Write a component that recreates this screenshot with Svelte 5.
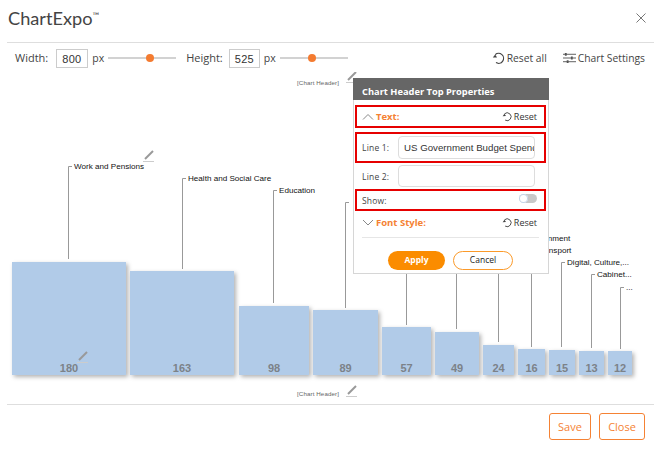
<script>
  const bars = [
    { x: 12, y: 262, w: 114, v: 180, lx: 68, top: 166, end: 259, label: 'Work and Pensions' },
    { x: 130, y: 271, w: 104, v: 163, lx: 182, top: 178, end: 269, label: 'Health and Social Care' },
    { x: 239, y: 306, w: 70, v: 98, lx: 273, top: 190, end: 303, label: 'Education' },
    { x: 313, y: 310, w: 65, v: 89, lx: 345, top: 202, end: 308, label: '' },
    { x: 382, y: 327, w: 49, v: 57, lx: 406, top: 214, end: 325, label: '' },
    { x: 435, y: 332, w: 44, v: 49, lx: 456, top: 226, end: 329, label: '' },
    { x: 483, y: 345, w: 31, v: 24, lx: 498, top: 238, end: 342, label: 'Local Government' },
    { x: 518, y: 349, w: 27, v: 16, lx: 531, top: 250, end: 347, label: 'Transport' },
    { x: 549, y: 350, w: 26, v: 15, lx: 561, top: 262, end: 347, label: 'Digital, Culture,...' },
    { x: 579, y: 351, w: 25, v: 13, lx: 591, top: 274, end: 348, label: 'Cabinet...' },
    { x: 608, y: 351, w: 24, v: 12, lx: 620, top: 287, end: 349, label: '...' }
  ];
  const pencils = [[149, 156], [352, 77], [83, 357], [352, 391]];
</script>

<div class="modal">
  <header class="head">
    <h1>ChartExpo<sup>™</sup></h1>
    <svg class="close" width="12" height="12" viewBox="0 0 12 12"><path d="M1.5 1.5l9 9M10.5 1.5l-9 9" /></svg>
  </header>

  <div class="tools">
    <span class="lbl">Width:</span>
    <span class="num w1">800</span>
    <span class="unit">px</span>
    <span class="slider"><i class="s1"></i></span>
    <span class="lbl h">Height:</span>
    <span class="num w2">525</span>
    <span class="unit">px</span>
    <span class="slider"><i class="s2"></i></span>
    <span class="grow"></span>
    <span class="act">
      <svg width="14" height="14" viewBox="0 0 14 14" class="rst"><path d="M3.2 3.6A5 5 0 1 1 4 11.6" /><path class="fill" d="M0.8 6.6l2.4-3 1.8 2.8z" /></svg>
      Reset all
    </span>
    <span class="act set">
      <svg width="13" height="12" viewBox="0 0 14 12" class="sl"><path d="M0 2h14M0 6h14M0 10h14" /><path class="k" d="M3 .6v3M9.500 4.500v3M5 8.500v3" /></svg>
      Chart Settings
    </span>
  </div>

  <div class="stage">
    <svg class="chart" width="661" height="332" viewBox="0 72 661 332">
      <text class="tiny" x="297" y="85">[Chart Header]</text>
      <text class="tiny" x="297" y="396">[Chart Header]</text>
      {#each bars as b}
        <path class="lead" d="M{b.lx + 4} {b.top + .5}H{b.lx + .5}V{b.end}" />
        {#if b.label}<text class="cat" x={b.lx + 6} y={b.top + 3}>{b.label}</text>{/if}
        <rect class="bar" x={b.x} y={b.y} width={b.w} height={375 - b.y} />
        <text class="val" x={b.x + b.w / 2} y="372">{b.v}</text>
      {/each}
      {#each pencils as [x, y]}
        <g transform="translate({x - 6} {y - 6})">
          <path class="pen" d="M2 9L10 1" />
          <path class="base" d="M0 11.500H11" />
        </g>
      {/each}
    </svg>

    <section class="panel">
      <h2>Chart Header Top Properties</h2>
      <div class="body">
        <div class="row red acc">
          <svg width="12" height="7" viewBox="0 0 12 7" class="chev"><path d="M1 6.500L6 1.500l5 5" /></svg>
          <b>Text:</b>
          <span class="grow"></span>
          <span class="rs">
            <svg width="11" height="11" viewBox="0 0 14 14" class="rst"><path d="M3.2 3.600A5 5 0 1 1 4 11.600" /><path class="fill" d="M0.800 6.600l2.400-3 1.800 2.800z" /></svg>
            Reset
          </span>
        </div>
        <div class="row red line1">
          <span class="fl">Line 1:</span>
          <span class="inp">US Government Budget Spending</span>
        </div>
        <div class="row line2">
          <span class="fl">Line 2:</span>
          <span class="inp"></span>
        </div>
        <div class="row red show">
          <span class="fl">Show:</span>
          <span class="grow"></span>
          <span class="toggle"><i></i></span>
        </div>
        <div class="row acc font">
          <svg width="12" height="7" viewBox="0 0 12 7" class="chev"><path d="M1 1l5 5 5-5" /></svg>
          <b>Font Style:</b>
          <span class="grow"></span>
          <span class="rs">
            <svg width="11" height="11" viewBox="0 0 14 14" class="rst"><path d="M3.200 3.600A5 5 0 1 1 4 11.600" /><path class="fill" d="M0.800 6.600l2.400-3 1.800 2.800z" /></svg>
            Reset
          </span>
        </div>
        <div class="btns">
          <button class="apply">Apply</button>
          <button class="cancel">Cancel</button>
        </div>
      </div>
    </section>
  </div>

  <footer class="foot">
    <button class="outline">Save</button>
    <button class="outline">Close</button>
  </footer>
</div>

<style>
  :global(body) { margin: 0; background: #fff; }
  .modal {
    width: 661px; height: 455px; overflow: hidden;
    display: flex; flex-direction: column;
    font-family: "Open Sans", sans-serif; color: #444;
  }
  .head {
    flex: none; height: 43px; margin: 0 7px; box-sizing: border-box;
    border-bottom: 1px solid #dedede; padding: 0 7px 0 1px;
    display: flex; align-items: center; justify-content: space-between;
  }
  .head h1 {
    margin: -5px 0 0; font: 400 18.200px/1 Lato, sans-serif; color: #444;
  }
  .head sup { font-size: 9px; vertical-align: 6px; line-height: 0; }
  .close { margin-top: -6px; }
  .close path { stroke: #777; stroke-width: 1; fill: none; }

  .tools {
    flex: none; height: 29px; padding: 0 16px 0 15px; display: flex; align-items: center;
    font-size: 11px;
  }
  .grow { flex: 1; }
  .num {
    box-sizing: border-box; height: 19px; border: 1px solid #ccc;
    font: 11px/19px "Liberation Sans", sans-serif; letter-spacing: .3px; color: #333;
    padding-left: 5px; margin: 1px 4px 0 0;
  }
  .w1 { width: 32px; margin-left: 8px; }
  .w2 { width: 31px; margin-left: 6px; }
  .unit { margin-right: 4px; font-size: 10.500px; }
  .slider { position: relative; width: 68px; height: 2px; background: #d2d2d2; }
  .slider i {
    position: absolute; top: -3px; width: 8px; height: 8px; border-radius: 50%; background: #f47b30;
  }
  .s1 { left: 38px; }
  .s2 { left: 28px; }
  .lbl.h { margin-left: 10px; }
  .act { display: flex; align-items: center; gap: 1px; white-space: nowrap; font-size: 10.300px; }
  .set { margin-left: 16px; gap: 2px; }
  .rst path { fill: none; stroke: #444; stroke-width: 1.200; }
  .rst path.fill { fill: #444; stroke: none; }
  .sl path { stroke: #555; stroke-width: 1; fill: none; }
  .sl .k { stroke-width: 2; }

  .stage { flex: none; position: relative; height: 332px; }
  .chart { display: block; font-family: "Liberation Sans", sans-serif; }
  .tiny { font-size: 6.200px; fill: #666; letter-spacing: .1px; }
  .lead { fill: none; stroke: #999; stroke-width: 1; }
  .cat { font-size: 8.100px; fill: #111; }
  .bar { fill: #b1cbe8; filter: drop-shadow(2px 2px 2px rgba(0,0,0,.3)); }
  .val { font-size: 11px; font-weight: 700; fill: #7c8288; text-anchor: middle; }
  .pen { stroke: #999; stroke-width: 2; fill: none; }
  .base { stroke: #ccc; stroke-width: 1; fill: none; }

  .panel {
    position: absolute; left: 353px; top: 6px; width: 196px; height: 196px;
    box-sizing: border-box; background: #fff; border: 1px solid #d6d6d6; border-top: 0;
  }
  .panel h2 {
    margin: 0 -1px; height: 22px; padding: 3px 0 0 9px; box-sizing: border-box;
    background: #666; color: #fff; font: 700 9.300px/21px "Open Sans", sans-serif;
  }
  .body { padding: 5px 0 0 0; }
  .row { display: flex; align-items: center; box-sizing: border-box; margin-left: 1px; padding: 0 7px 0 7px; }
  .red { border: 2px solid #e60000; width: 191px; padding-left: 5px; }
  .acc { height: 23px; font-size: 9.500px; }
  .acc b { color: #f58234; font-weight: 700; margin-left: 2px; }
  .rs { display: flex; align-items: center; gap: 1px; color: #333; font-size: 9px; }
  .chev path { fill: none; stroke: #888; stroke-width: 1; }
  .line1 { height: 31px; margin-top: 4px; }
  .line2 { height: 26px; }
  .fl { font-size: 8.500px; color: #444; width: 35px; letter-spacing: .2px; }
  .inp {
    box-sizing: border-box; width: 137px; height: 23px; border: 1px solid #ddd; border-radius: 4px;
    font: 9.700px/21px "Liberation Sans", sans-serif; color: #333; padding: 0 0 0 5px;
    overflow: hidden; white-space: nowrap; display: block; margin-left: 1px;
  }
  .line2 .inp { height: 22px; }
  .show { height: 22px; margin-top: 0; }
  .toggle { width: 18px; height: 9px; border-radius: 5px; background: #c8c8c8; position: relative; margin-right: 0; margin-top: -4px; }
  .toggle i { position: absolute; left: 0; top: 0; width: 9px; height: 9px; border-radius: 50%; background: #fff; box-shadow: 0 0 0 1px #c4d4e8 inset; }
  .font { height: 27px; border-bottom: 1px solid #e6e6e6; margin: 0 0 0 8px; padding: 0 2px 3px 0; width: 177px; }
  .btns { display: flex; justify-content: center; gap: 8px; margin-top: 13px; padding-right: 1px; }
  .btns button {
    height: 19px; border-radius: 10px; font: 700 8.500px/1 "Open Sans", sans-serif; padding: 0;
  }
  .apply { width: 57px; background: #fb8c00; color: #fff; border: 0; }
  .cancel { width: 60px; background: #fff; color: #222; border: 1px solid #fb9a2a; font-weight: 400 !important; }

  .foot {
    flex: 1; margin: 0 7px; border-top: 1px solid #dedede; padding: 8px 9px 0 0;
    display: flex; justify-content: flex-end; gap: 8px; align-items: flex-start;
  }
  .outline {
    height: 27px; box-sizing: border-box; padding: 0; width: 42px; background: #fff; color: #f58234;
    border: 1px solid #f58234; border-radius: 3px; font: 11px/1 "Open Sans", sans-serif;
  }
  .outline:last-child { width: 46px; }
</style>
